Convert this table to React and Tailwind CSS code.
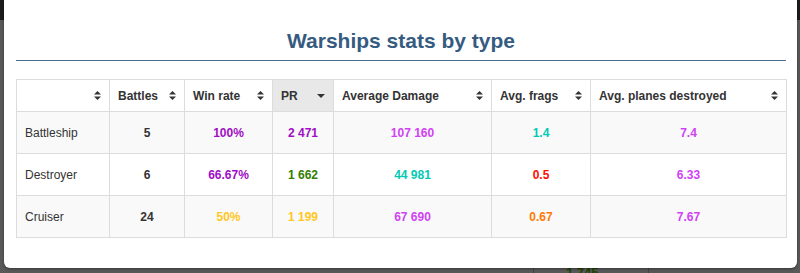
const cols = [93, 75, 88, 61, 158, 99, 196];

const headers = ['', 'Battles', 'Win rate', 'PR', 'Average Damage', 'Avg. frags', 'Avg. planes destroyed'];

const rows = [
    {
        type: 'Battleship',
        cells: [
            ['5', 'text-[#333]'],
            ['100%', 'text-[#a00dc5]'],
            ['2 471', 'text-[#a00dc5]'],
            ['107 160', 'text-[#d042f3]'],
            ['1.4', 'text-[#02c9b3]'],
            ['7.4', 'text-[#d042f3]'],
        ],
    },
    {
        type: 'Destroyer',
        cells: [
            ['6', 'text-[#333]'],
            ['66.67%', 'text-[#a00dc5]'],
            ['1 662', 'text-[#318000]'],
            ['44 981', 'text-[#02c9b3]'],
            ['0.5', 'text-[#fe0e00]'],
            ['6.33', 'text-[#d042f3]'],
        ],
    },
    {
        type: 'Cruiser',
        cells: [
            ['24', 'text-[#333]'],
            ['50%', 'text-[#ffc71f]'],
            ['1 199', 'text-[#ffc71f]'],
            ['67 690', 'text-[#d042f3]'],
            ['0.67', 'text-[#fe7903]'],
            ['7.67', 'text-[#d042f3]'],
        ],
    },
];

function SortIcon() {
    return (
        <svg width="7" height="9" viewBox="0 0 7 9" className="shrink-0">
            <path d="M0 3.5 L3.5 0 L7 3.5 Z" fill="#333" />
            <path d="M0 5.5 L3.5 9 L7 5.5 Z" fill="#333" />
        </svg>
    );
}

function SortDown() {
    return (
        <svg width="8" height="4" viewBox="0 0 8 4" className="shrink-0">
            <path d="M0 0 L8 0 L4 4 Z" fill="#333" />
        </svg>
    );
}

export default function App() {
    return (
        <div className="relative w-[800px] h-[273px] overflow-hidden bg-[#595959] font-['Liberation_Sans',Arial,sans-serif]">
            <div className="absolute left-0 top-0 w-[4px] h-[20px] bg-[#1c1c1c]" />
            <div className="absolute right-0 top-0 w-[3px] h-[20px] bg-[#1c1c1c]" />
            <div className="absolute left-[533px] top-[268px] w-px h-[5px] bg-[#444]" />
            <div className="absolute left-[648px] top-[268px] w-px h-[5px] bg-[#444]" />
            <div className="absolute left-[566px] top-[266px] text-[13px] font-bold text-[#1f4400] leading-none">1 745</div>

            <div className="relative ml-[4px] w-[793px] h-[268px] bg-white rounded-b-[6px] pl-[12px] pr-[11px] shadow-[0_1px_3px_rgba(0,0,0,0.4)]">
                <div className="pt-[29px] pb-[7px] border-b border-[#4a6b8f]">
                    <h2 className="text-center text-[21px] leading-[24px] font-bold text-[#365b80]">
                        Warships stats by type
                    </h2>
                </div>

                <table className="mt-[18px] w-[770px] table-fixed border-collapse text-[12px] text-[#333]">
                    <colgroup>
                        {cols.map((w, i) => (
                            <col key={i} style={{ width: w }} />
                        ))}
                    </colgroup>
                    <thead>
                        <tr className="h-[32px]">
                            {headers.map((h, i) => (
                                <th
                                    key={i}
                                    className={`border border-[#dcdcdc] px-[8px] text-left font-bold ${
                                        h === 'PR' ? 'bg-[#e8e8e8]' : 'bg-white'
                                    }`}
                                >
                                    <div className="flex items-center justify-between">
                                        <span>{h}</span>
                                        {h === 'PR' ? <SortDown /> : <SortIcon />}
                                    </div>
                                </th>
                            ))}
                        </tr>
                    </thead>
                    <tbody>
                        {rows.map((r, i) => (
                            <tr key={r.type} className={`h-[42px] ${i % 2 === 0 ? 'bg-[#f9f9f9]' : 'bg-white'}`}>
                                <td className="border border-[#dcdcdc] px-[8px] text-left">{r.type}</td>
                                {r.cells.map(([v, c], j) => (
                                    <td key={j} className={`border border-[#dcdcdc] px-[8px] text-center font-bold ${c}`}>
                                        {v}
                                    </td>
                                ))}
                            </tr>
                        ))}
                    </tbody>
                </table>
            </div>
        </div>
    );
}
